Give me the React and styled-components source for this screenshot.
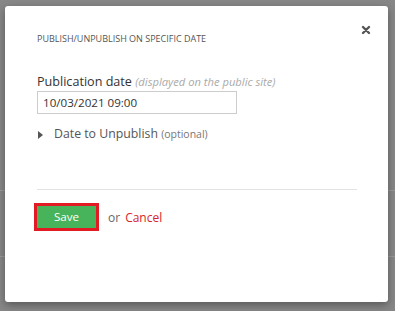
import React from 'react';
import styled, { createGlobalStyle } from 'styled-components';

const GlobalStyle = createGlobalStyle`
  html, body {
    margin: 0;
    padding: 0;
    background: #888888;
    font-family: "Open Sans", "Liberation Sans", sans-serif;
  }
`;

const Backdrop = styled.div`
  width: 395px;
  height: 311px;
  box-sizing: border-box;
  padding: 6px 7px 0 5px;
  background: #878787;
  position: relative;
  overflow: hidden;
`;

const BackLine = styled.div`
  position: absolute;
  left: 0;
  right: 0;
  top: ${p => p.top}px;
  height: 1px;
  background: #9a9a9a;
`;

const Modal = styled.div`
  position: relative;
  z-index: 1;
  width: 383px;
  height: 296px;
  box-sizing: border-box;
  background: #fff;
  border-radius: 3px;
  box-shadow: 0 3px 8px rgba(0, 0, 0, 0.35);
  padding: 27px 31px 0 32px;
`;

const Close = styled.button`
  position: absolute;
  top: 17px;
  right: 17px;
  border: 0;
  background: none;
  padding: 0;
  width: 10px;
  height: 10px;
  cursor: pointer;
`;

const Title = styled.h4`
  margin: 0;
  font-size: 9px;
  font-weight: 400;
  line-height: 12px;
  color: #555;
  text-transform: uppercase;
`;

const Field = styled.div`
  margin-top: 29px;
`;

const Label = styled.label`
  display: block;
  font-size: 12.6px;
  line-height: 16px;
  color: #333;
  font-weight: 500;
`;

const Hint = styled.em`
  font-size: 11.2px;
  color: #aaa;
  font-weight: 400;
`;

const DateInput = styled.input`
  display: block;
  margin-top: 1px;
  width: 200px;
  height: 23px;
  box-sizing: border-box;
  border: 1px solid #cccccc;
  padding: 0 5px;
  font-family: inherit;
  font-size: 11.6px;
  color: #333;
  outline: none;
`;

const Toggle = styled.div`
  margin-top: 12px;
  display: flex;
  align-items: center;
  gap: 11px;
  font-size: 12.3px;
  color: #555;
  line-height: 16px;
`;

const Caret = styled.span`
  width: 0;
  height: 0;
  border-top: 4px solid transparent;
  border-bottom: 4px solid transparent;
  border-left: 5px solid #555;
  margin-left: 1px;
  margin-top: 2px;
`;

const Optional = styled.span`
  font-size: 10.5px;
  color: #777;
`;

const Divider = styled.hr`
  margin: 47px 0 0 0;
  border: 0;
  border-top: 1px solid #e3e3e3;
`;

const Actions = styled.div`
  margin-top: 13px;
  display: flex;
  align-items: center;
  margin-left: -3px;
`;

const Highlight = styled.div`
  border: 3px solid #e21a23;
  padding: 0;
  line-height: 0;
`;

const SaveButton = styled.button`
  width: 59px;
  height: 22px;
  border: 0;
  background: #47b35a;
  color: #fff;
  font-family: inherit;
  font-size: 11.6px;
  line-height: 22px;
  padding: 0;
  cursor: pointer;
`;

const Or = styled.span`
  margin-left: 9px;
  font-size: 12px;
  color: #666;
`;

const CancelLink = styled.a`
  margin-left: 5px;
  font-size: 12px;
  color: #d8232a;
  text-decoration: none;
`;

export default function App() {
  return (
    <>
      <GlobalStyle />
      <Backdrop>
        <BackLine top={190} />
        <BackLine top={256} />
        <Modal>
          <Close aria-label="Close">
            <svg width="10" height="10" viewBox="0 0 10 10">
              <path d="M2 2 L8 8 M8 2 L2 8" stroke="#555" strokeWidth="2.4" strokeLinecap="round" />
            </svg>
          </Close>
          <Title>Publish/Unpublish on specific date</Title>
          <Field>
            <Label>
              Publication date <Hint>(displayed on the public site)</Hint>
            </Label>
            <DateInput defaultValue="10/03/2021 09:00" />
          </Field>
          <Toggle>
            <Caret />
            <span>
              Date to Unpublish <Optional>(optional)</Optional>
            </span>
          </Toggle>
          <Divider />
          <Actions>
            <Highlight>
              <SaveButton>Save</SaveButton>
            </Highlight>
            <Or>or</Or>
            <CancelLink href="#">Cancel</CancelLink>
          </Actions>
        </Modal>
      </Backdrop>
    </>
  );
}
